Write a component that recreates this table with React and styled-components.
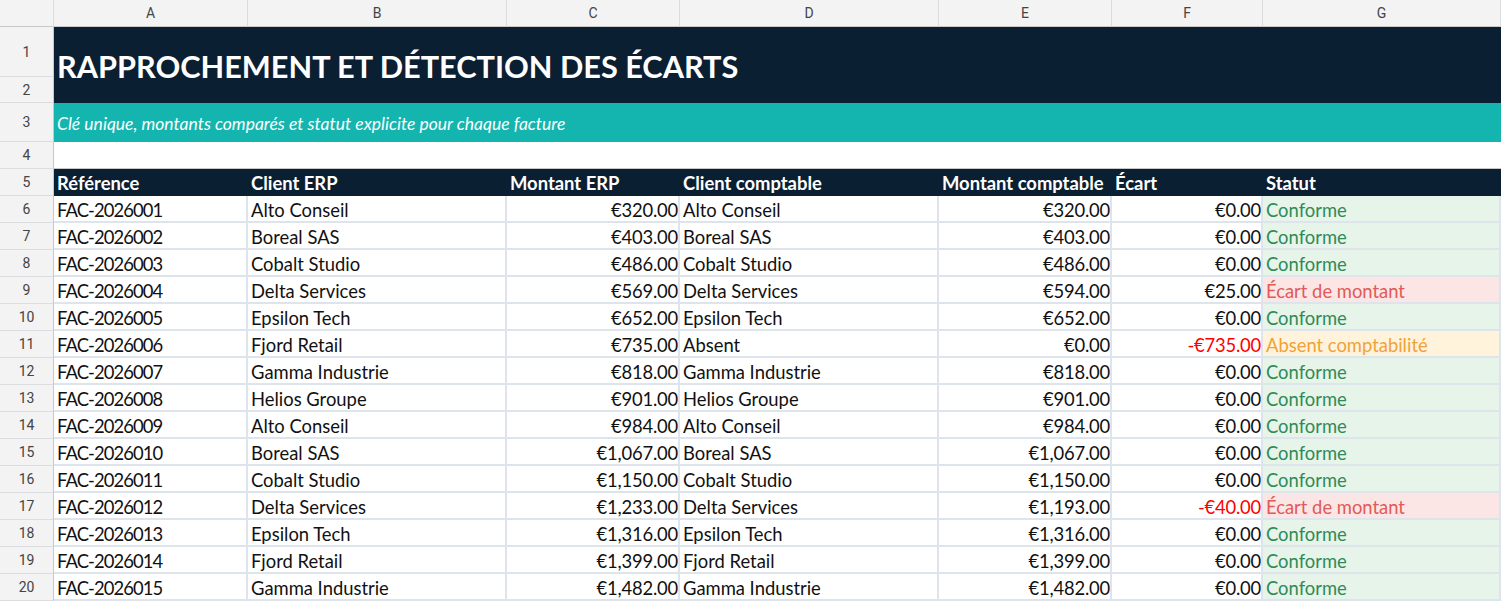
import React from 'react'
import styled, { createGlobalStyle } from 'styled-components'

const Global = createGlobalStyle`
  body { margin: 0; background: #fff; }
  * { box-sizing: border-box; }
`

const NAVY = '#0b1f33'
const TEAL = '#13b5ae'
const LINE = '#dde4ec'

const Sheet = styled.div`
  display: grid;
  grid-template-columns: 54px 194px 259px 173px 259px 173px 151px 238px;
  grid-template-rows: 27px 50px 26px 39px 27px 27px repeat(15, 27px);
  width: 1501px;
  font-family: Lato, "Noto Sans", sans-serif;
  overflow: hidden;
`

const Corner = styled.div`
  background: #f3f3f3;
  border-right: 1px solid #dadce0;
  border-bottom: 1px solid #c8c8c8;
`

const ColHead = styled.div`
  background: #f3f3f3;
  border-right: 1px solid #dadce0;
  border-bottom: 1px solid #c8c8c8;
  display: flex;
  align-items: center;
  justify-content: center;
  font-family: Roboto, "Liberation Sans", Arial, sans-serif;
  font-size: 14px;
  color: #444;
`

const RowHead = styled.div`
  background: #f3f3f3;
  border-right: 1px solid #c8c8c8;
  border-bottom: 1px solid #dadce0;
  display: flex;
  align-items: center;
  justify-content: center;
  font-family: Roboto, "Liberation Sans", Arial, sans-serif;
  font-size: 14px;
  color: #444;
`

const Title = styled.div`
  grid-column: 2 / -1;
  grid-row: 2 / 4;
  background: ${NAVY};
  color: #fff;
  font-weight: 700;
  font-size: 30.7px;
  display: flex;
  align-items: center;
  padding: 3px 3px 0;
  white-space: nowrap;
`

const Subtitle = styled.div`
  grid-column: 2 / -1;
  background: ${TEAL};
  color: #fff;
  font-style: italic;
  font-size: 17.5px;
  display: flex;
  align-items: center;
  padding: 2px 3px 0;
`

const Blank = styled.div`
  grid-column: 2 / -1;
  background: #fff;
  border-bottom: 1px solid #c8c8c8;
`

const HeadCell = styled.div`
  background: ${NAVY};
  color: #fff;
  font-weight: 700;
  font-size: 18.4px;
  display: flex;
  align-items: flex-end;
  padding: 0 3px 2px;
  white-space: nowrap;
`

const tones = {
  ok: { bg: '#e7f4ea', fg: '#2e8b57' },
  gap: { bg: '#fbe5e5', fg: '#e05a56' },
  absent: { bg: '#fff3dc', fg: '#f0a23a' },
}

const spacing = { ref: '-0.9px', amount: '-0.2px' }

const Cell = styled.div`
  background: ${(p) => (p.$tone ? tones[p.$tone].bg : '#fff')};
  color: ${(p) => (p.$tone ? tones[p.$tone].fg : p.$neg ? '#ff0000' : '#111')};
  border-right: 2px solid ${LINE};
  border-bottom: 2px solid ${LINE};
  font-size: 18.4px;
  letter-spacing: ${(p) => spacing[p.$kind] || 'normal'};
  display: flex;
  align-items: flex-end;
  justify-content: ${(p) => (p.$kind === 'amount' ? 'flex-end' : 'flex-start')};
  padding: 0 0 0 3px;
  white-space: nowrap;
  overflow: hidden;
`

const letters = ['A', 'B', 'C', 'D', 'E', 'F', 'G']

const rows = [
  ['FAC-2026001', 'Alto Conseil', 320, 'Alto Conseil', 320],
  ['FAC-2026002', 'Boreal SAS', 403, 'Boreal SAS', 403],
  ['FAC-2026003', 'Cobalt Studio', 486, 'Cobalt Studio', 486],
  ['FAC-2026004', 'Delta Services', 569, 'Delta Services', 594],
  ['FAC-2026005', 'Epsilon Tech', 652, 'Epsilon Tech', 652],
  ['FAC-2026006', 'Fjord Retail', 735, 'Absent', 0],
  ['FAC-2026007', 'Gamma Industrie', 818, 'Gamma Industrie', 818],
  ['FAC-2026008', 'Helios Groupe', 901, 'Helios Groupe', 901],
  ['FAC-2026009', 'Alto Conseil', 984, 'Alto Conseil', 984],
  ['FAC-2026010', 'Boreal SAS', 1067, 'Boreal SAS', 1067],
  ['FAC-2026011', 'Cobalt Studio', 1150, 'Cobalt Studio', 1150],
  ['FAC-2026012', 'Delta Services', 1233, 'Delta Services', 1193],
  ['FAC-2026013', 'Epsilon Tech', 1316, 'Epsilon Tech', 1316],
  ['FAC-2026014', 'Fjord Retail', 1399, 'Fjord Retail', 1399],
  ['FAC-2026015', 'Gamma Industrie', 1482, 'Gamma Industrie', 1482],
]

const euro = (n) => {
  const s = '€' + Math.abs(n).toLocaleString('en-US', { minimumFractionDigits: 2, maximumFractionDigits: 2 })
  return n < 0 ? '-' + s : s
}

const statusOf = (client, erp, compta) => {
  if (client === 'Absent') return { tone: 'absent', label: 'Absent comptabilité' }
  if (erp !== compta) return { tone: 'gap', label: 'Écart de montant' }
  return { tone: 'ok', label: 'Conforme' }
}

export default function App() {
  return (
    <>
      <Global />
      <Sheet>
        <Corner />
        {letters.map((l) => (
          <ColHead key={l}>{l}</ColHead>
        ))}

        <RowHead>1</RowHead>
        <Title>RAPPROCHEMENT ET DÉTECTION DES ÉCARTS</Title>
        <RowHead>2</RowHead>

        <RowHead>3</RowHead>
        <Subtitle>Clé unique, montants comparés et statut explicite pour chaque facture</Subtitle>

        <RowHead>4</RowHead>
        <Blank />

        <RowHead>5</RowHead>
        <HeadCell>Référence</HeadCell>
        <HeadCell>Client ERP</HeadCell>
        <HeadCell>Montant ERP</HeadCell>
        <HeadCell>Client comptable</HeadCell>
        <HeadCell>Montant comptable</HeadCell>
        <HeadCell>Écart</HeadCell>
        <HeadCell>Statut</HeadCell>

        {rows.map(([ref, client, erp, compta, amount], i) => {
          const diff = amount - erp
          const st = statusOf(compta, erp, amount)
          return (
            <React.Fragment key={ref}>
              <RowHead>{i + 6}</RowHead>
              <Cell $kind="ref">{ref}</Cell>
              <Cell>{client}</Cell>
              <Cell $kind="amount">{euro(erp)}</Cell>
              <Cell>{compta}</Cell>
              <Cell $kind="amount">{euro(amount)}</Cell>
              <Cell $kind="amount" $neg={diff < 0}>{euro(diff)}</Cell>
              <Cell $tone={st.tone}>{st.label}</Cell>
            </React.Fragment>
          )
        })}
      </Sheet>
    </>
  )
}
